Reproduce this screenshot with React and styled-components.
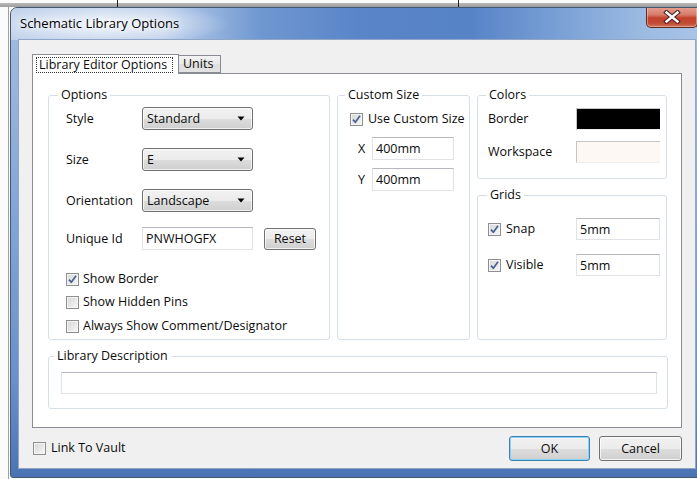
import React from 'react';
import styled, { createGlobalStyle } from 'styled-components';

const GlobalStyle = createGlobalStyle`
  html, body { margin: 0; padding: 0; }
  body {
    width: 697px;
    height: 479px;
    overflow: hidden;
    background: #fbfbfb;
    font-family: "Open Sans", "Noto Sans", sans-serif;
    font-size: 12.5px;
    color: #0c0c0c;
  }
`;

/* Desktop behind the dialog: a grey window edge with a couple of dark ticks */
const Desktop = styled.div`
  width: 697px;
  height: 479px;
  overflow: hidden;
  box-sizing: border-box;
  padding: 7px 0 0 10px;
  background-color: #fbfbfb;
  background-image:
    linear-gradient(#222, #222),
    linear-gradient(#222, #222),
    linear-gradient(#b9b9b9, #9d9d9d),
    linear-gradient(#a0a0a0, #a0a0a0);
  background-size: 1px 8px, 1px 8px, 100% 4px, 1px 100%;
  background-position: 117px 0, 458px 0, 0 3px, 8px 3px;
  background-repeat: no-repeat;
`;

const Window = styled.div`
  width: 694px;
  height: 471px;
  box-sizing: border-box;
  border: 1px solid #45576e;
  border-radius: 7px 7px 3px 3px;
  background: linear-gradient(to bottom, #a3bde0 0%, #86a8d8 40%, #6890ca 80%, #4a73b4 100%);
  display: flex;
  flex-direction: column;
  overflow: hidden;
`;

const TitleBar = styled.div`
  height: 32px;
  flex: 0 0 32px;
  display: flex;
  align-items: flex-start;
  justify-content: space-between;
  padding: 0 5px 0 9px;
  background:
    radial-gradient(ellipse 125px 22px at 95px 16px, rgba(255,255,255,0.85), rgba(255,255,255,0) 100%),
    linear-gradient(to right, #bfd1eb 0%, #bacdea 22%, #6f98d1 36%, #5a85c8 50%, #5682c6 66%, #7ca2d6 80%, #9dbce2 92%, #a9c4e6 100%);
`;

const Title = styled.span`
  margin-top: 7px;
  font-size: 13px;
  line-height: 17px;
  color: #000;
  text-shadow: 0 0 6px #fff, 0 0 10px #fff;
`;

const CloseButton = styled.div`
  width: 52px;
  height: 21px;
  margin-top: -1px;
  box-sizing: border-box;
  border: 1px solid #5a2b24;
  border-top: none;
  border-radius: 0 0 5px 5px;
  background: linear-gradient(to bottom, #e6a293 0%, #d6796a 40%, #c4402b 55%, #c14a33 80%, #d07058 100%);
  box-shadow: inset 0 0 0 1px rgba(255, 220, 210, 0.45);
  display: flex;
  align-items: center;
  justify-content: center;
`;

const Client = styled.div`
  margin: 0 8px;
  height: 428px;
  flex: 0 0 428px;
  box-sizing: border-box;
  background: #f0f0f0;
  box-shadow: 0 0 0 1px #8fa6c7;
  padding: 14px 13px 0 13px;
  display: flex;
  flex-direction: column;
`;

const TabStrip = styled.div`
  display: flex;
  align-items: flex-end;
  height: 20px;
  margin-bottom: -1px;
`;

const Tab = styled.div`
  position: relative;
  box-sizing: border-box;
  width: ${p => p.$w};
  height: ${p => (p.$active ? '20px' : '18px')};
  margin-left: ${p => (p.$active ? '0' : '-1px')};
  margin-bottom: ${p => (p.$active ? '0' : '1px')};
  z-index: ${p => (p.$active ? 1 : 0)};
  border: 1px solid #898c95;
  border-bottom: ${p => (p.$active ? 'none' : '1px solid #898c95')};
  background: ${p => (p.$active ? '#fff' : 'linear-gradient(to bottom, #f3f3f3, #e8e8e8 50%, #dedede 50%, #e3e3e3)')};
  padding: ${p => (p.$active ? '2px 2px 0 3px' : '0 0 0 4px')};
  display: flex;
  align-items: ${p => (p.$active ? 'flex-start' : 'center')};
  line-height: 16px;
`;

const FocusText = styled.span`
  outline: 1px dotted #333;
  outline-offset: -1px;
  padding: 0 6px 0 3px;
  line-height: 16px;
`;

const Panel = styled.div`
  height: 355px;
  box-sizing: border-box;
  background: #fff;
  border: 1px solid #898c95;
  padding: 21px 13px 0 15px;
`;

const TopGrid = styled.div`
  display: grid;
  grid-template-columns: 282px 133px 190px;
  column-gap: 7px;
  height: 245px;
`;

const Stack = styled.div`
  display: flex;
  flex-direction: column;
  gap: 16px;
`;

const Group = styled.div`
  position: relative;
  box-sizing: border-box;
  border: 1px solid #d5dfe5;
  border-radius: 3px;
  height: ${p => p.$h || 'auto'};
  margin-top: ${p => p.$mt || '0'};
  padding-left: ${p => p.$pl || '10px'};
  display: flex;
  flex-direction: column;
  align-items: flex-start;
`;

/* caption sits over the group's top edge */
const Caption = styled.span`
  position: absolute;
  top: -9px;
  left: ${p => p.$x || '9px'};
  padding: 0 3px;
  background: #fff;
  line-height: 16px;
`;

const Row = styled.div`
  display: flex;
  align-items: center;
  height: ${p => p.$h || '23px'};
  margin-top: ${p => p.$mt || '0'};
  padding-left: ${p => p.$pl || '0'};
`;

const Label = styled.span`
  width: ${p => p.$w || 'auto'};
  flex: 0 0 auto;
  line-height: 16px;
`;

const Select = styled.div`
  width: 111px;
  height: 23px;
  box-sizing: border-box;
  border: 1px solid #707070;
  border-radius: 3px;
  background: linear-gradient(to bottom, #f2f2f2 0%, #ebebeb 50%, #dddddd 51%, #cfcfcf 100%);
  box-shadow: inset 0 0 0 1px rgba(255,255,255,0.7);
  display: flex;
  align-items: center;
  justify-content: space-between;
  padding: 0 7px 0 4px;
`;

const TextBox = styled.div`
  width: ${p => p.$w || '111px'};
  height: ${p => p.$h || '23px'};
  box-sizing: border-box;
  border: 1px solid #dfe3e8;
  border-top-color: #b5b8bf;
  background: #fff;
  display: flex;
  align-items: center;
  padding-left: 3px;
`;

const Swatch = styled.div`
  width: 84px;
  height: 22px;
  box-sizing: border-box;
  background: ${p => p.$color};
  border: 1px solid #c4c4c4;
  border-right: none;
  border-bottom-color: #eee;
`;

const PushButton = styled.div`
  width: ${p => p.$w || '52px'};
  height: ${p => p.$h || '23px'};
  margin-left: ${p => p.$ml || '0'};
  box-sizing: border-box;
  border: 1px solid ${p => (p.$default ? '#3c7fb1' : '#707070')};
  border-radius: 3px;
  background: linear-gradient(to bottom, #f2f2f2 0%, #ebebeb 50%, #dddddd 51%, #cfcfcf 100%);
  box-shadow: inset 0 0 0 1px ${p => (p.$default ? '#86d4f6' : 'rgba(255,255,255,0.75)')};
  display: flex;
  align-items: center;
  justify-content: center;
`;

const CheckRow = styled.label`
  display: flex;
  align-items: center;
  height: 16px;
  margin-top: ${p => p.$mt || '0'};
  width: ${p => p.$w || 'auto'};
  flex: 0 0 auto;
  gap: ${p => p.$gap || '4px'};
  line-height: 16px;
`;

const Box = styled.span`
  width: 13px;
  height: 13px;
  box-sizing: border-box;
  flex: 0 0 13px;
  border: 1px solid #8e8f8f;
  background: linear-gradient(135deg, #d6d6d6 0%, #eaeaea 60%, #f8f8f8 100%);
  box-shadow: inset 0 0 0 1px #f4f4f4;
  display: flex;
  align-items: center;
  justify-content: center;
`;

const Footer = styled.div`
  height: 40px;
  display: flex;
  align-items: center;
  padding-left: 1px;
`;

const Spacer = styled.div`
  flex: 1;
`;

const Check = ({ checked }) => (
  <Box>
    {checked && (
      <svg width="11" height="11" viewBox="0 0 11 11">
        <path d="M2 5.6 L4.3 8.3 L9 1.8" fill="none" stroke="#4b5f91" strokeWidth="1.7" strokeLinejoin="round" />
      </svg>
    )}
  </Box>
);

const Arrow = () => (
  <svg width="8" height="5" viewBox="0 0 8 5">
    <path d="M0.5 0.5 H7.5 L4 4.5 Z" fill="#000" />
  </svg>
);

const CloseGlyph = () => (
  <svg width="18" height="14" viewBox="0 0 18 14">
    <path d="M3.5 2.5 L14.5 11.5 M14.5 2.5 L3.5 11.5" stroke="#4a2320" strokeWidth="4.6" strokeLinecap="square" />
    <path d="M3.5 2.5 L14.5 11.5 M14.5 2.5 L3.5 11.5" stroke="#fafafa" strokeWidth="2.4" strokeLinecap="square" />
  </svg>
);

const ComboRow = ({ label, value, mt }) => (
  <Row $mt={mt}>
    <Label $w="76px">{label}</Label>
    <Select>
      <span>{value}</span>
      <Arrow />
    </Select>
  </Row>
);

export default function App() {
  return (
    <>
      <GlobalStyle />
      <Desktop>
        <Window>
          <TitleBar>
            <Title>Schematic Library Options</Title>
            <CloseButton>
              <CloseGlyph />
            </CloseButton>
          </TitleBar>
          <Client>
            <TabStrip>
              <Tab $active $w="147px">
                <FocusText>Library Editor Options</FocusText>
              </Tab>
              <Tab $w="43px">Units</Tab>
            </TabStrip>
            <Panel>
              <TopGrid>
                <Group $pl="17px">
                  <Caption $x="9px">Options</Caption>
                  <ComboRow label="Style" value="Standard" mt="11px" />
                  <ComboRow label="Size" value="E" mt="18px" />
                  <ComboRow label="Orientation" value="Landscape" mt="18px" />
                  <Row $mt="15px">
                    <Label $w="76px">Unique Id</Label>
                    <TextBox>PNWHOGFX</TextBox>
                    <PushButton $ml="11px" $h="22px">Reset</PushButton>
                  </Row>
                  <CheckRow $mt="21px"><Check checked />Show Border</CheckRow>
                  <CheckRow $mt="7px"><Check />Show Hidden Pins</CheckRow>
                  <CheckRow $mt="8px"><Check />Always Show Comment/Designator</CheckRow>
                </Group>

                <Group $pl="12px">
                  <Caption $x="7px">Custom Size</Caption>
                  <CheckRow $mt="15px" $gap="5px"><Check checked />Use Custom Size</CheckRow>
                  <Row $mt="10px" $pl="8px">
                    <Label $w="14px">X</Label>
                    <TextBox $w="82px">400mm</TextBox>
                  </Row>
                  <Row $mt="8px" $pl="8px">
                    <Label $w="14px">Y</Label>
                    <TextBox $w="82px">400mm</TextBox>
                  </Row>
                </Group>

                <Stack>
                  <Group $h="84px">
                    <Caption $x="8px">Colors</Caption>
                    <Row $mt="12px" $h="22px">
                      <Label $w="88px">Border</Label>
                      <Swatch $color="#000" />
                    </Row>
                    <Row $mt="11px" $h="22px">
                      <Label $w="88px">Workspace</Label>
                      <Swatch $color="#fdf8f3" />
                    </Row>
                  </Group>
                  <Group $h="145px">
                    <Caption $x="9px">Grids</Caption>
                    <Row $mt="22px" $h="22px">
                      <CheckRow $w="88px" $gap="5px"><Check checked />Snap</CheckRow>
                      <TextBox $w="84px" $h="22px">5mm</TextBox>
                    </Row>
                    <Row $mt="14px" $h="22px">
                      <CheckRow $w="88px" $gap="5px"><Check checked />Visible</CheckRow>
                      <TextBox $w="84px" $h="22px">5mm</TextBox>
                    </Row>
                  </Group>
                </Stack>
              </TopGrid>

              <Group $mt="16px" $h="53px" $pl="12px">
                <Caption $x="5px">Library Description</Caption>
                <Row $mt="15px" $h="22px">
                  <TextBox $w="596px" $h="22px" />
                </Row>
              </Group>
            </Panel>
            <Footer>
              <CheckRow $gap="5px"><Check />Link To Vault</CheckRow>
              <Spacer />
              <PushButton $default $w="81px" $h="25px">OK</PushButton>
              <PushButton $w="83px" $h="25px" $ml="9px">Cancel</PushButton>
            </Footer>
          </Client>
        </Window>
      </Desktop>
    </>
  );
}
